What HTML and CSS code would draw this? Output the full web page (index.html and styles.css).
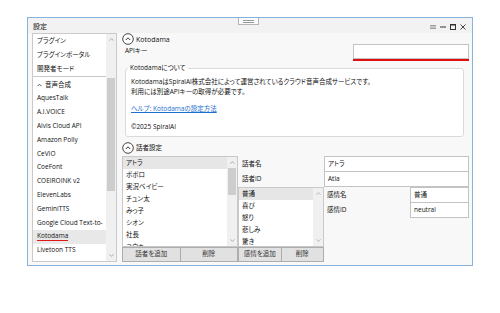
FILE: index.html
```html
<!DOCTYPE html>
<html lang="ja">
<head>
  <meta charset="UTF-8" />
  <title>設定</title>
  <link rel="stylesheet" href="styles.css">
</head>
<body>

  <div class="window">
    <div class="titlebar">
      <span class="title">設定</span>
      <div class="grip"><span></span></div>
      <div class="controls">
        <svg width="6" height="6" viewBox="0 0 6 6"><path d="M0 1.5h6M0 3h6M0 4.5h6" stroke="#888" stroke-width="0.8"/></svg>
        <svg width="6" height="6" viewBox="0 0 6 6"><path d="M0 3h6" stroke="#333" stroke-width="1"/></svg>
        <svg width="6" height="6" viewBox="0 0 6 6"><rect x="0.5" y="0.5" width="5" height="5" fill="none" stroke="#333" stroke-width="1"/><path d="M0 1h6" stroke="#333" stroke-width="1"/></svg>
        <svg width="6" height="6" viewBox="0 0 6 6"><path d="M0.5 0.5l5 5M5.5 0.5l-5 5" stroke="#333" stroke-width="0.9"/></svg>
      </div>
    </div>

    <div class="content">
      <!-- 左のメニュー -->
      <div class="sidebar">
        <div class="side-list">
          <div class="side-item top">プラグイン</div>
          <div class="side-item top">プラグインポータル</div>
          <div class="side-item top">開発者モード</div>
          <div class="side-sep"></div>
          <div class="side-item group">
            <svg width="5" height="4" viewBox="0 0 5 4"><path d="M0.5 3.2L2.5 1.2L4.5 3.2" fill="none" stroke="#444" stroke-width="0.9"/></svg>
            音声合成
          </div>
          <div class="side-item">AquesTalk</div>
          <div class="side-item">A.I.VOICE</div>
          <div class="side-item">Aivis Cloud API</div>
          <div class="side-item">Amazon Polly</div>
          <div class="side-item">CeVIO</div>
          <div class="side-item">CoeFont</div>
          <div class="side-item">COEIROINK v2</div>
          <div class="side-item">ElevenLabs</div>
          <div class="side-item">GeminiTTS</div>
          <div class="side-item">Google Cloud Text-to-</div>
          <div class="side-item selected"><span class="marked">Kotodama</span></div>
          <div class="side-item">Livetoon TTS</div>
          <div class="side-item">Microsoft Azure</div>
        </div>
        <div class="vscroll">
          <div class="arrow"><svg width="5" height="3" viewBox="0 0 5 3"><path d="M0.5 2.6L2.5 0.6L4.5 2.6" fill="none" stroke="#999" stroke-width="0.8"/></svg></div>
          <div class="track"><div class="thumb side-thumb"></div></div>
          <div class="arrow"><svg width="5" height="3" viewBox="0 0 5 3"><path d="M0.5 0.4L2.5 2.4L4.5 0.4" fill="none" stroke="#999" stroke-width="0.8"/></svg></div>
        </div>
      </div>

      <!-- 設定本体 -->
      <div class="main">
        <div class="section-head">
          <svg width="12" height="12" viewBox="0 0 12 12"><circle cx="6" cy="6" r="5.3" fill="#fff" stroke="#333" stroke-width="0.9"/><path d="M3.8 7L6 4.8L8.2 7" fill="none" stroke="#333" stroke-width="1"/></svg>
          <span class="head-title">Kotodama</span>
        </div>

        <div class="api-row">
          <span class="label">APIキー</span>
          <div class="api-input"></div>
        </div>

        <fieldset class="about">
          <legend>Kotodamaについて</legend>
          <p>KotodamaはSpiralAI株式会社によって運営されているクラウド音声合成サービスです。<br>利用には別途APIキーの取得が必要です。</p>
          <p class="help"><a href="#">ヘルプ: Kotodamaの設定方法</a></p>
          <p class="copy">©2025 SpiralAI</p>
        </fieldset>

        <div class="section-head second">
          <svg width="12" height="12" viewBox="0 0 12 12"><circle cx="6" cy="6" r="5.3" fill="#fff" stroke="#333" stroke-width="0.9"/><path d="M3.8 7L6 4.8L8.2 7" fill="none" stroke="#333" stroke-width="1"/></svg>
          <span>話者設定</span>
        </div>

        <div class="speaker-area">
          <div class="spk-col">
            <div class="list spk-list">
              <div class="rows">
                <div class="row selected">アトラ</div>
                <div class="row">ポポロ</div>
                <div class="row">実況ベイビー</div>
                <div class="row">チュン太</div>
                <div class="row">みっ子</div>
                <div class="row">シオン</div>
                <div class="row">社長</div>
                <div class="row">ユウキ</div>
              </div>
              <div class="vscroll">
                <div class="arrow"><svg width="5" height="3" viewBox="0 0 5 3"><path d="M0.5 2.6L2.5 0.6L4.5 2.6" fill="none" stroke="#999" stroke-width="0.8"/></svg></div>
                <div class="track"><div class="thumb spk-thumb"></div></div>
                <div class="arrow"><svg width="5" height="3" viewBox="0 0 5 3"><path d="M0.5 0.4L2.5 2.4L4.5 0.4" fill="none" stroke="#999" stroke-width="0.8"/></svg></div>
              </div>
            </div>
            <div class="btns">
              <button>話者を追加</button>
              <button>削除</button>
            </div>
          </div>

          <div class="detail-col">
            <div class="field-row">
              <span class="label">話者名</span>
              <div class="input">アトラ</div>
            </div>
            <div class="field-row">
              <span class="label">話者ID</span>
              <div class="input">Atla</div>
            </div>

            <div class="emotion-area">
              <div class="emo-col">
                <div class="list emo-list">
                  <div class="rows">
                    <div class="row selected">普通</div>
                    <div class="row">喜び</div>
                    <div class="row">怒り</div>
                    <div class="row">悲しみ</div>
                    <div class="row">驚き</div>
                  </div>
                  <div class="vscroll">
                    <div class="arrow"><svg width="5" height="3" viewBox="0 0 5 3"><path d="M0.5 2.6L2.5 0.6L4.5 2.6" fill="none" stroke="#aaa" stroke-width="0.8"/></svg></div>
                    <div class="track"></div>
                    <div class="arrow"><svg width="5" height="3" viewBox="0 0 5 3"><path d="M0.5 0.4L2.5 2.4L4.5 0.4" fill="none" stroke="#aaa" stroke-width="0.8"/></svg></div>
                  </div>
                </div>
                <div class="btns">
                  <button>感情を追加</button>
                  <button>削除</button>
                </div>
              </div>
              <div class="emo-fields">
                <div class="field-row">
                  <span class="label">感情名</span>
                  <div class="input">普通</div>
                </div>
                <div class="field-row">
                  <span class="label">感情ID</span>
                  <div class="input">neutral</div>
                </div>
              </div>
            </div>
          </div>
        </div>
      </div>
    </div>
  </div>

</body>
</html>
```

FILE: styles.css
```css
* {
  box-sizing: border-box;
}

body {
  margin: 0;
  background: #fff;
  font-family: "Open Sans", "Noto Sans CJK JP", sans-serif;
  font-size: 6.5px;
  line-height: 1;
  color: #111;
  font-feature-settings: "palt";
}

.window {
  width: 446px;
  height: 249px;
  margin: 17px 0 0 27px;
  border: 1px solid #86b3e0;
  background: #f8f8f8;
  display: flex;
  flex-direction: column;
}

.titlebar {
  position: relative;
  flex-shrink: 0;
  height: 15px;
  display: flex;
  align-items: center;
  padding: 2px 6px 0 5px;
  background: #f2f2f2;
}

.title {
  font-size: 7px;
}

.grip {
  position: absolute;
  left: 210px;
  top: 0;
  width: 21px;
  height: 7px;
  border: 1px solid #b5b5b5;
  border-top: none;
  background: #fbfbfb;
  display: flex;
  align-items: center;
  justify-content: center;
}

.grip span {
  width: 11px;
  height: 3px;
  border-top: 1px solid #999;
  border-bottom: 1px solid #999;
}

.controls {
  margin-left: auto;
  display: flex;
  gap: 4px;
}

.controls svg {
  display: block;
}

.content {
  flex: 1;
  min-height: 0;
  display: flex;
  gap: 2px;
  padding: 0 3px 3px 4px;
}

/* サイドバー */
.sidebar {
  width: 85px;
  min-height: 0;
  display: flex;
  border: 1px solid #cacaca;
  background: #fff;
  overflow: hidden;
}

.side-list {
  flex: 1;
  overflow: hidden;
}

.side-item {
  height: 13.8px;
  display: flex;
  align-items: center;
  padding-left: 4px;
  white-space: nowrap;
}

.side-item.top {
  height: 14px;
}

.side-item.group svg {
  margin-right: 3px;
}

.side-sep {
  height: 1px;
  background: #c8c8c8;
  margin-bottom: 1px;
}

.side-item.selected {
  background: #e8e8e8;
}

.marked {
  border-bottom: 1.5px solid #e01818;
  padding-bottom: 0.5px;
  margin-top: 1px;
}

.vscroll {
  width: 10px;
  display: flex;
  flex-direction: column;
  background: #f0f0f0;
}

.vscroll .arrow {
  height: 11px;
  flex-shrink: 0;
  display: flex;
  align-items: center;
  justify-content: center;
}

.vscroll .track {
  flex: 1;
  min-height: 0;
}

.thumb {
  background: #cdcdcd;
  margin: 0 1px;
}

.side-thumb {
  margin-top: 33px;
  height: 113px;
}

/* メイン */
.main {
  flex: 1;
  min-height: 0;
  padding-left: 3px;
  display: flex;
  flex-direction: column;
}

.main > * {
  flex-shrink: 0;
}

.section-head {
  height: 12px;
  display: flex;
  align-items: center;
  gap: 2px;
}

.head-title {
  font-size: 7px;
}

.section-head.second {
  margin-top: 5px;
}

.api-row {
  margin-top: -1px;
  height: 15px;
  display: flex;
  align-items: center;
}

.api-row .label {
  padding-left: 3px;
}

.api-input {
  margin-left: auto;
  width: 116px;
  height: 15px;
  border: 1px solid #c3c3c3;
  background: #fff;
  box-shadow: 0 2px 0 #e01010;
}

.about {
  margin: 5px 5px 0 3px;
  padding: 5px 5px 4px;
  border: 1px solid #dadada;
  border-radius: 3px;
  background: #fff;
  min-width: 0;
}

.about legend {
  line-height: 8px;
  padding: 0 2px;
  margin-left: -3px;
}

.about p {
  margin: 0;
  line-height: 10px;
}

.about .help {
  margin-top: 7px;
}

.about .copy {
  margin-top: 8px;
}

.about a {
  color: #1a6fd1;
}

/* 話者設定 */
.speaker-area {
  margin-top: 2px;
  height: 106px;
  display: flex;
}

.spk-col {
  width: 116px;
  display: flex;
  flex-direction: column;
}

.list {
  display: flex;
  border: 1px solid #c8c8c8;
  background: #fff;
  overflow: hidden;
}

.spk-list {
  height: 91px;
  flex-shrink: 0;
}

.rows {
  flex: 1;
  overflow: hidden;
}

.row {
  height: 12px;
  display: flex;
  align-items: center;
  padding-left: 3px;
  white-space: nowrap;
}

.row.selected {
  background: #e6e6e6;
}

.spk-thumb {
  height: 27px;
}

.btns {
  height: 15px;
  flex-shrink: 0;
  display: flex;
}

.btns button {
  flex: 1;
  margin: 0;
  padding: 0;
  font: inherit;
  color: #333;
  background: #e1e1e1;
  border: 1px solid #adadad;
}

.btns button + button {
  margin-left: -1px;
}

.detail-col {
  flex: 1;
  display: flex;
  flex-direction: column;
}

.field-row {
  height: 16px;
  flex-shrink: 0;
  display: flex;
  align-items: center;
}

.field-row + .field-row {
  margin-top: -1px;
}

.field-row .label {
  width: 86px;
  padding-left: 4px;
}

.field-row .input {
  flex: 1;
  height: 100%;
  display: flex;
  align-items: center;
  padding-left: 3px;
  border: 1px solid #c3c3c3;
  background: #fff;
}

.emotion-area {
  flex: 1;
  min-height: 0;
  display: flex;
}

.emo-col {
  width: 86px;
  display: flex;
  flex-direction: column;
}

.emo-list {
  flex: 1;
  min-height: 0;
}

.emo-fields {
  flex: 1;
}

.emo-fields .label {
  padding-left: 3px;
}
```
